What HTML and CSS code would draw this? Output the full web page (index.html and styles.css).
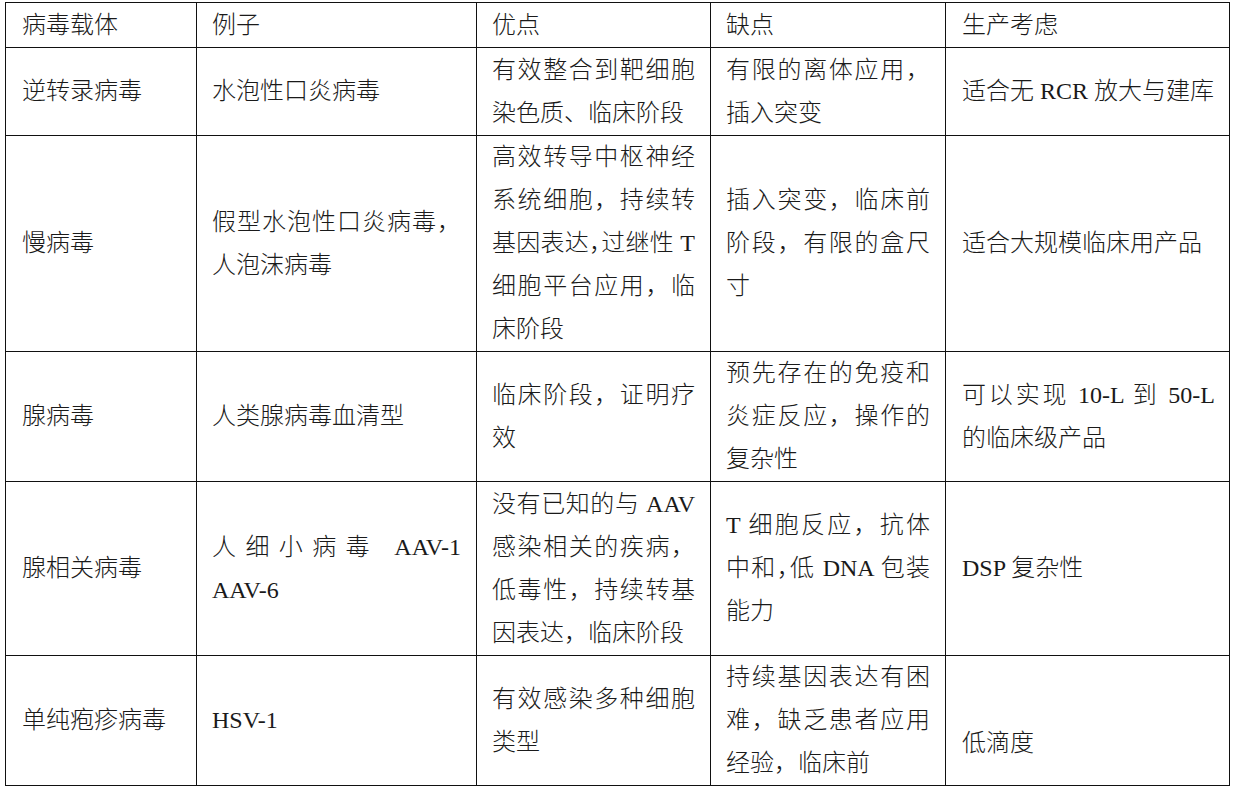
FILE: index.html
```html
<!DOCTYPE html>
<html lang="zh-CN">
<head>
<meta charset="utf-8">
<title>病毒载体</title>
<link rel="stylesheet" href="styles.css">
</head>
<body>
<table class="vt">
  <colgroup>
    <col class="c1"><col class="c2"><col class="c3"><col class="c4"><col class="c5">
  </colgroup>
  <tr class="r0">
    <td class="k1">病毒载体</td>
    <td>例子</td>
    <td>优点</td>
    <td>缺点</td>
    <td class="k5">生产考虑</td>
  </tr>
  <tr class="r1">
    <td class="k1">逆转录病毒</td>
    <td>水泡性口炎病毒</td>
    <td><span class="ln j">有效整合到靶细胞</span><span class="ln">染色质、临床阶段</span></td>
    <td><span class="ln j">有限的离体应用，</span><span class="ln">插入突变</span></td>
    <td class="k5">适合无 RCR 放大与建库</td>
  </tr>
  <tr class="r2">
    <td class="k1">慢病毒</td>
    <td><span class="ln j">假型水泡性口炎病毒，</span><span class="ln">人泡沫病毒</span></td>
    <td><span class="ln j">高效转导中枢神经</span><span class="ln j">系统细胞，持续转</span><span class="ln j">基因表达<span class="hc">，</span>过继性 T</span><span class="ln j">细胞平台应用，临</span><span class="ln">床阶段</span></td>
    <td><span class="ln j">插入突变，临床前</span><span class="ln j">阶段，有限的盒尺</span><span class="ln">寸</span></td>
    <td class="k5">适合大规模临床用产品</td>
  </tr>
  <tr class="r3">
    <td class="k1">腺病毒</td>
    <td>人类腺病毒血清型</td>
    <td><span class="ln j">临床阶段，证明疗</span><span class="ln">效</span></td>
    <td><span class="ln j">预先存在的免疫和</span><span class="ln j">炎症反应，操作的</span><span class="ln">复杂性</span></td>
    <td class="k5"><span class="ln j">可以实现 10-L 到 50-L</span><span class="ln">的临床级产品</span></td>
  </tr>
  <tr class="r4">
    <td class="k1">腺相关病毒</td>
    <td><span class="ln j">人细小病毒 AAV-1</span><span class="ln">AAV-6</span></td>
    <td><span class="ln j">没有已知的与 AAV</span><span class="ln j">感染相关的疾病，</span><span class="ln j">低毒性，持续转基</span><span class="ln">因表达，临床阶段</span></td>
    <td><span class="ln j">T 细胞反应，抗体</span><span class="ln j">中和<span class="hc">，</span>低 DNA 包装</span><span class="ln">能力</span></td>
    <td class="k5">DSP 复杂性</td>
  </tr>
  <tr class="r5">
    <td class="k1">单纯疱疹病毒</td>
    <td>HSV-1</td>
    <td><span class="ln j">有效感染多种细胞</span><span class="ln">类型</span></td>
    <td><span class="ln j">持续基因表达有困</span><span class="ln j">难，缺乏患者应用</span><span class="ln">经验，临床前</span></td>
    <td class="k5 low">低滴度</td>
  </tr>
</table>
</body>
</html>
```

FILE: styles.css
```css
html, body {
  margin: 0;
  padding: 0;
  background: #ffffff;
}

.vt {
  margin: 2px 0 0 5px;
  border-collapse: separate;
  border-spacing: 0;
  table-layout: fixed;
  width: 1225px;
  border-left: 1px solid #111;
  border-top: 1px solid #111;
  font-family: "Liberation Serif", "Noto Sans CJK SC", serif;
  font-size: 24px;
  font-weight: 300;
  line-height: 43px;
  color: #1a1a1a;
}

.c1 { width: 191px; }
.c2 { width: 280px; }
.c3 { width: 234px; }
.c4 { width: 235px; }
.c5 { width: 284px; }

.vt td {
  box-sizing: border-box;
  border-right: 1px solid #111;
  border-bottom: 1px solid #111;
  padding: 0 15px 0 15px;
  vertical-align: middle;
  text-align: left;
  white-space: nowrap;
}

.vt td.k1 { padding-left: 16px; }
.vt td.k5 { padding-left: 16px; padding-right: 14px; }
.vt td.low { padding-top: 46px; }

.r0 { height: 45px; }
.r1 { height: 88px; }
.r2 { height: 215px; }
.r3 { height: 130px; }
.r4 { height: 174px; }
.r5 { height: 130px; }

.ln { display: block; }
.ln.j {
  text-align: justify;
  text-align-last: justify;
}

.hc { letter-spacing: -12px; margin-right: 0; }
```
